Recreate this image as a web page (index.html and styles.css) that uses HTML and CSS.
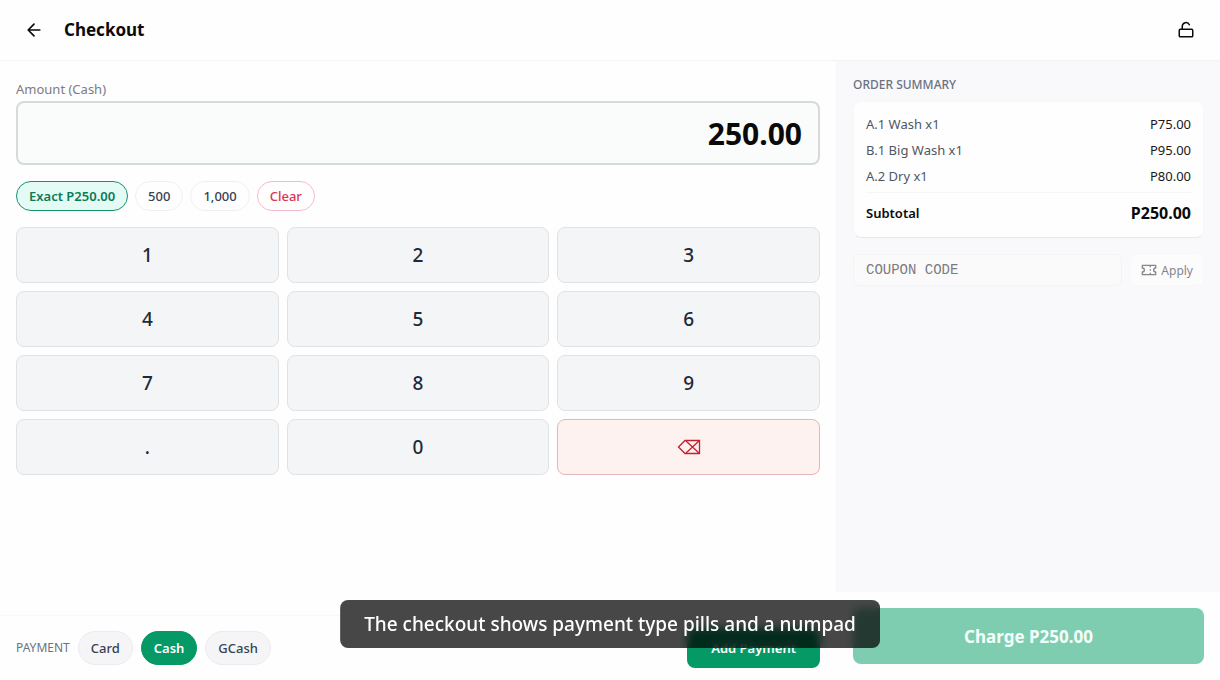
FILE: index.html
```html
<!DOCTYPE html>
<html lang="en">
<head>
    <meta charset="UTF-8">
    <meta name="viewport" content="width=device-width, initial-scale=1.0">
    <title>Checkout</title>
    <link rel="stylesheet" href="styles.css">
</head>
<body>
    <header class="topbar">
        <button class="icon-btn" type="button" aria-label="Back">
            <svg width="20" height="20" viewBox="0 0 24 24" fill="none" stroke="currentColor" stroke-width="2" stroke-linecap="round" stroke-linejoin="round"><path d="M19 12H5M12 19l-7-7 7-7"/></svg>
        </button>
        <h1>Checkout</h1>
        <button class="icon-btn lock" type="button" aria-label="Lock">
            <svg width="18" height="18" viewBox="0 0 24 24" fill="none" stroke="currentColor" stroke-width="2" stroke-linecap="round" stroke-linejoin="round"><rect x="3" y="11" width="18" height="10" rx="1.5"/><path d="M7 11V7a5 5 0 0 1 9.5-2"/></svg>
        </button>
    </header>

    <div class="content">
        <main class="pay">
            <div class="entry">
                <label class="amount-label" for="amount">Amount (Cash)</label>
                <input class="amount" type="text" id="amount" inputmode="decimal" value="250.00">

                <div class="quick">
                    <button class="chip exact" type="button">Exact P250.00</button>
                    <button class="chip" type="button">500</button>
                    <button class="chip" type="button">1,000</button>
                    <button class="chip clear" type="button">Clear</button>
                </div>

                <div class="numpad">
                    <button type="button">1</button>
                    <button type="button">2</button>
                    <button type="button">3</button>
                    <button type="button">4</button>
                    <button type="button">5</button>
                    <button type="button">6</button>
                    <button type="button">7</button>
                    <button type="button">8</button>
                    <button type="button">9</button>
                    <button type="button">.</button>
                    <button type="button">0</button>
                    <button class="erase" type="button" aria-label="Backspace">
                        <svg width="24" height="16" viewBox="0 0 24 16" fill="none" stroke="currentColor" stroke-width="1.3"><path d="M8 1.5h14.5v13H8L1.5 8z"/><path d="M9 2l13 12M22 2L9 14"/></svg>
                    </button>
                </div>
            </div>

            <div class="methods">
                <span class="methods-title">PAYMENT</span>
                <button class="pill" type="button">Card</button>
                <button class="pill active" type="button">Cash</button>
                <button class="pill" type="button">GCash</button>
                <button class="add" type="button">Add Payment</button>
            </div>
        </main>

        <aside class="side">
            <div class="summary">
                <h2>ORDER SUMMARY</h2>
                <div class="card">
                    <div class="line"><span>A.1 Wash x1</span><span class="price">P75.00</span></div>
                    <div class="line"><span>B.1 Big Wash x1</span><span class="price">P95.00</span></div>
                    <div class="line"><span>A.2 Dry x1</span><span class="price">P80.00</span></div>
                    <div class="subtotal"><span>Subtotal</span><span class="total">P250.00</span></div>
                </div>
                <form class="coupon">
                    <input type="text" placeholder="COUPON CODE" aria-label="Coupon code">
                    <button type="button">
                        <svg width="16" height="16" viewBox="0 0 24 24" fill="none" stroke="currentColor" stroke-width="2" stroke-linejoin="round"><path d="M2 5h20v4a3 3 0 0 0 0 6v4H2v-4a3 3 0 0 0 0-6z"/><path d="M14 5v3M14 11v2M14 16v3"/></svg>
                        Apply
                    </button>
                </form>
            </div>
            <div class="charge-bar">
                <button class="charge" type="button" disabled>Charge P250.00</button>
            </div>
        </aside>
    </div>

    <div class="caption">The checkout shows payment type pills and a numpad</div>
</body>
</html>
```
FILE: styles.css
```css
* {
    box-sizing: border-box;
}
body {
    margin: 0;
    height: 100vh;
    display: flex;
    flex-direction: column;
    font-family: "Noto Sans", sans-serif;
    font-size: 13px;
    line-height: 20px;
    color: #0a0a0a;
    background: #fefefe;
}
button, input {
    font-family: inherit;
    color: inherit;
}
button {
    cursor: pointer;
}
h1, h2 {
    margin: 0;
}

/* header */
.topbar {
    display: flex;
    align-items: center;
    gap: 12px;
    padding: 12px 16px;
    border-bottom: 1px solid #f4f4f5;
}
.topbar h1 {
    font-size: 17px;
    line-height: 28px;
    font-weight: 700;
}
.icon-btn {
    display: flex;
    align-items: center;
    justify-content: center;
    width: 36px;
    height: 36px;
    padding: 0;
    border: none;
    background: none;
}
.lock {
    margin-left: auto;
}

.content {
    flex: 1;
    display: flex;
    min-height: 0;
}
.pay {
    flex: 1;
    display: flex;
    flex-direction: column;
    min-width: 0;
}
.entry {
    flex: 1;
    padding: 16px;
}
.amount-label {
    display: block;
    line-height: 24px;
    color: #7b7b82;
}
.amount {
    display: block;
    width: 100%;
    height: 64px;
    padding: 0 16px;
    border: 2px solid #d7dadd;
    border-radius: 8px;
    background: #fafbfb;
    font-size: 30px;
    font-weight: 700;
    text-align: right;
}

/* quick amounts */
.quick {
    display: flex;
    gap: 7px;
    margin: 16px 0;
}
.chip {
    height: 30px;
    padding: 0 12px;
    border: 1px solid #f0f0f4;
    border-radius: 15px;
    background: #fefefe;
    font-size: 13px;
    font-weight: 500;
    color: #374151;
}
.exact {
    border-color: #15916a;
    background: #e3fbf4;
    font-weight: 600;
    color: #0b7a57;
}
.clear {
    border-color: #f3bccb;
    color: #dc3355;
}

.numpad {
    display: grid;
    grid-template-columns: repeat(3, 1fr);
    gap: 8px;
}
.numpad button {
    display: flex;
    align-items: center;
    justify-content: center;
    height: 56px;
    border: 1px solid #dfe3e5;
    border-radius: 8px;
    background: #f3f5f6;
    font-size: 19px;
    font-weight: 500;
    color: #1f2937;
}
.numpad .erase {
    border-color: #e4b5bb;
    background: #fef2f1;
    color: #c51f2a;
}

/* payment types */
.methods {
    display: flex;
    align-items: center;
    gap: 8px;
    padding: 12px 16px;
    border-top: 1px solid #f8f8f9;
}
.methods-title {
    font-size: 12px;
    color: #6b7280;
}
.pill {
    height: 34px;
    padding: 0 12px;
    border: 1px solid #ececef;
    border-radius: 17px;
    background: #f5f5f7;
    font-size: 13px;
    font-weight: 500;
    color: #374151;
}
.pill.active {
    border-color: #059966;
    background: #059966;
    color: #fff;
    font-weight: 600;
}
.add {
    height: 40px;
    margin-left: auto;
    padding: 0 24px;
    border: none;
    border-radius: 8px;
    background: #059966;
    font-size: 13px;
    font-weight: 600;
    color: #fff;
}

/* order summary */
.side {
    width: 384px;
    display: flex;
    flex-direction: column;
}
.summary {
    flex: 1;
    padding: 16px;
    border-left: 1px solid #f6f6f8;
    background: #f9f9fb;
}
.summary h2 {
    margin-bottom: 8px;
    font-size: 12px;
    line-height: 16px;
    font-weight: 500;
    color: #6b7280;
}
.card {
    padding: 12px;
    border: 1px solid #f7f7f9;
    border-bottom-color: #e8e8ea;
    border-radius: 8px;
    background: #fefefe;
}
.line {
    display: flex;
    justify-content: space-between;
    margin-bottom: 6px;
    color: #52565e;
}
.price {
    color: #18181b;
}
.subtotal {
    display: flex;
    justify-content: space-between;
    padding-top: 8px;
    border-top: 1px solid #f6f6f7;
    line-height: 24px;
    font-weight: 600;
}
.total {
    font-size: 16px;
    font-weight: 700;
}
.coupon {
    display: flex;
    gap: 8px;
    margin-top: 16px;
}
.coupon input {
    flex: 1;
    min-width: 0;
    height: 32px;
    padding: 0 12px;
    border: 1px solid #f3f3f5;
    border-radius: 6px;
    background: #fafafb;
    font-family: "Liberation Mono", monospace;
    font-size: 14px;
}
.coupon input::placeholder {
    color: #7b7b80;
}
.coupon button {
    display: flex;
    align-items: center;
    gap: 4px;
    height: 32px;
    padding: 0 10px;
    border: 1px solid #f8f8f9;
    border-radius: 6px;
    background: #fcfcfd;
    font-size: 12px;
    color: #85858a;
}
.charge-bar {
    padding: 16px 16px 16px 17px;
    border-top: 1px solid #fafafb;
}
.charge {
    display: block;
    width: 100%;
    height: 56px;
    border: none;
    border-radius: 8px;
    background: #7fcdb1;
    font-size: 17px;
    font-weight: 700;
    color: #f4fffb;
}

/* caption shown over the page */
.caption {
    position: absolute;
    bottom: 32px;
    left: 50%;
    transform: translateX(-50%);
    padding: 10px 24px;
    border-radius: 8px;
    background: rgba(0, 0, 0, 0.72);
    backdrop-filter: blur(4px);
    font-size: 19px;
    line-height: 28px;
    font-weight: 500;
    color: #fff;
    white-space: nowrap;
}
```
